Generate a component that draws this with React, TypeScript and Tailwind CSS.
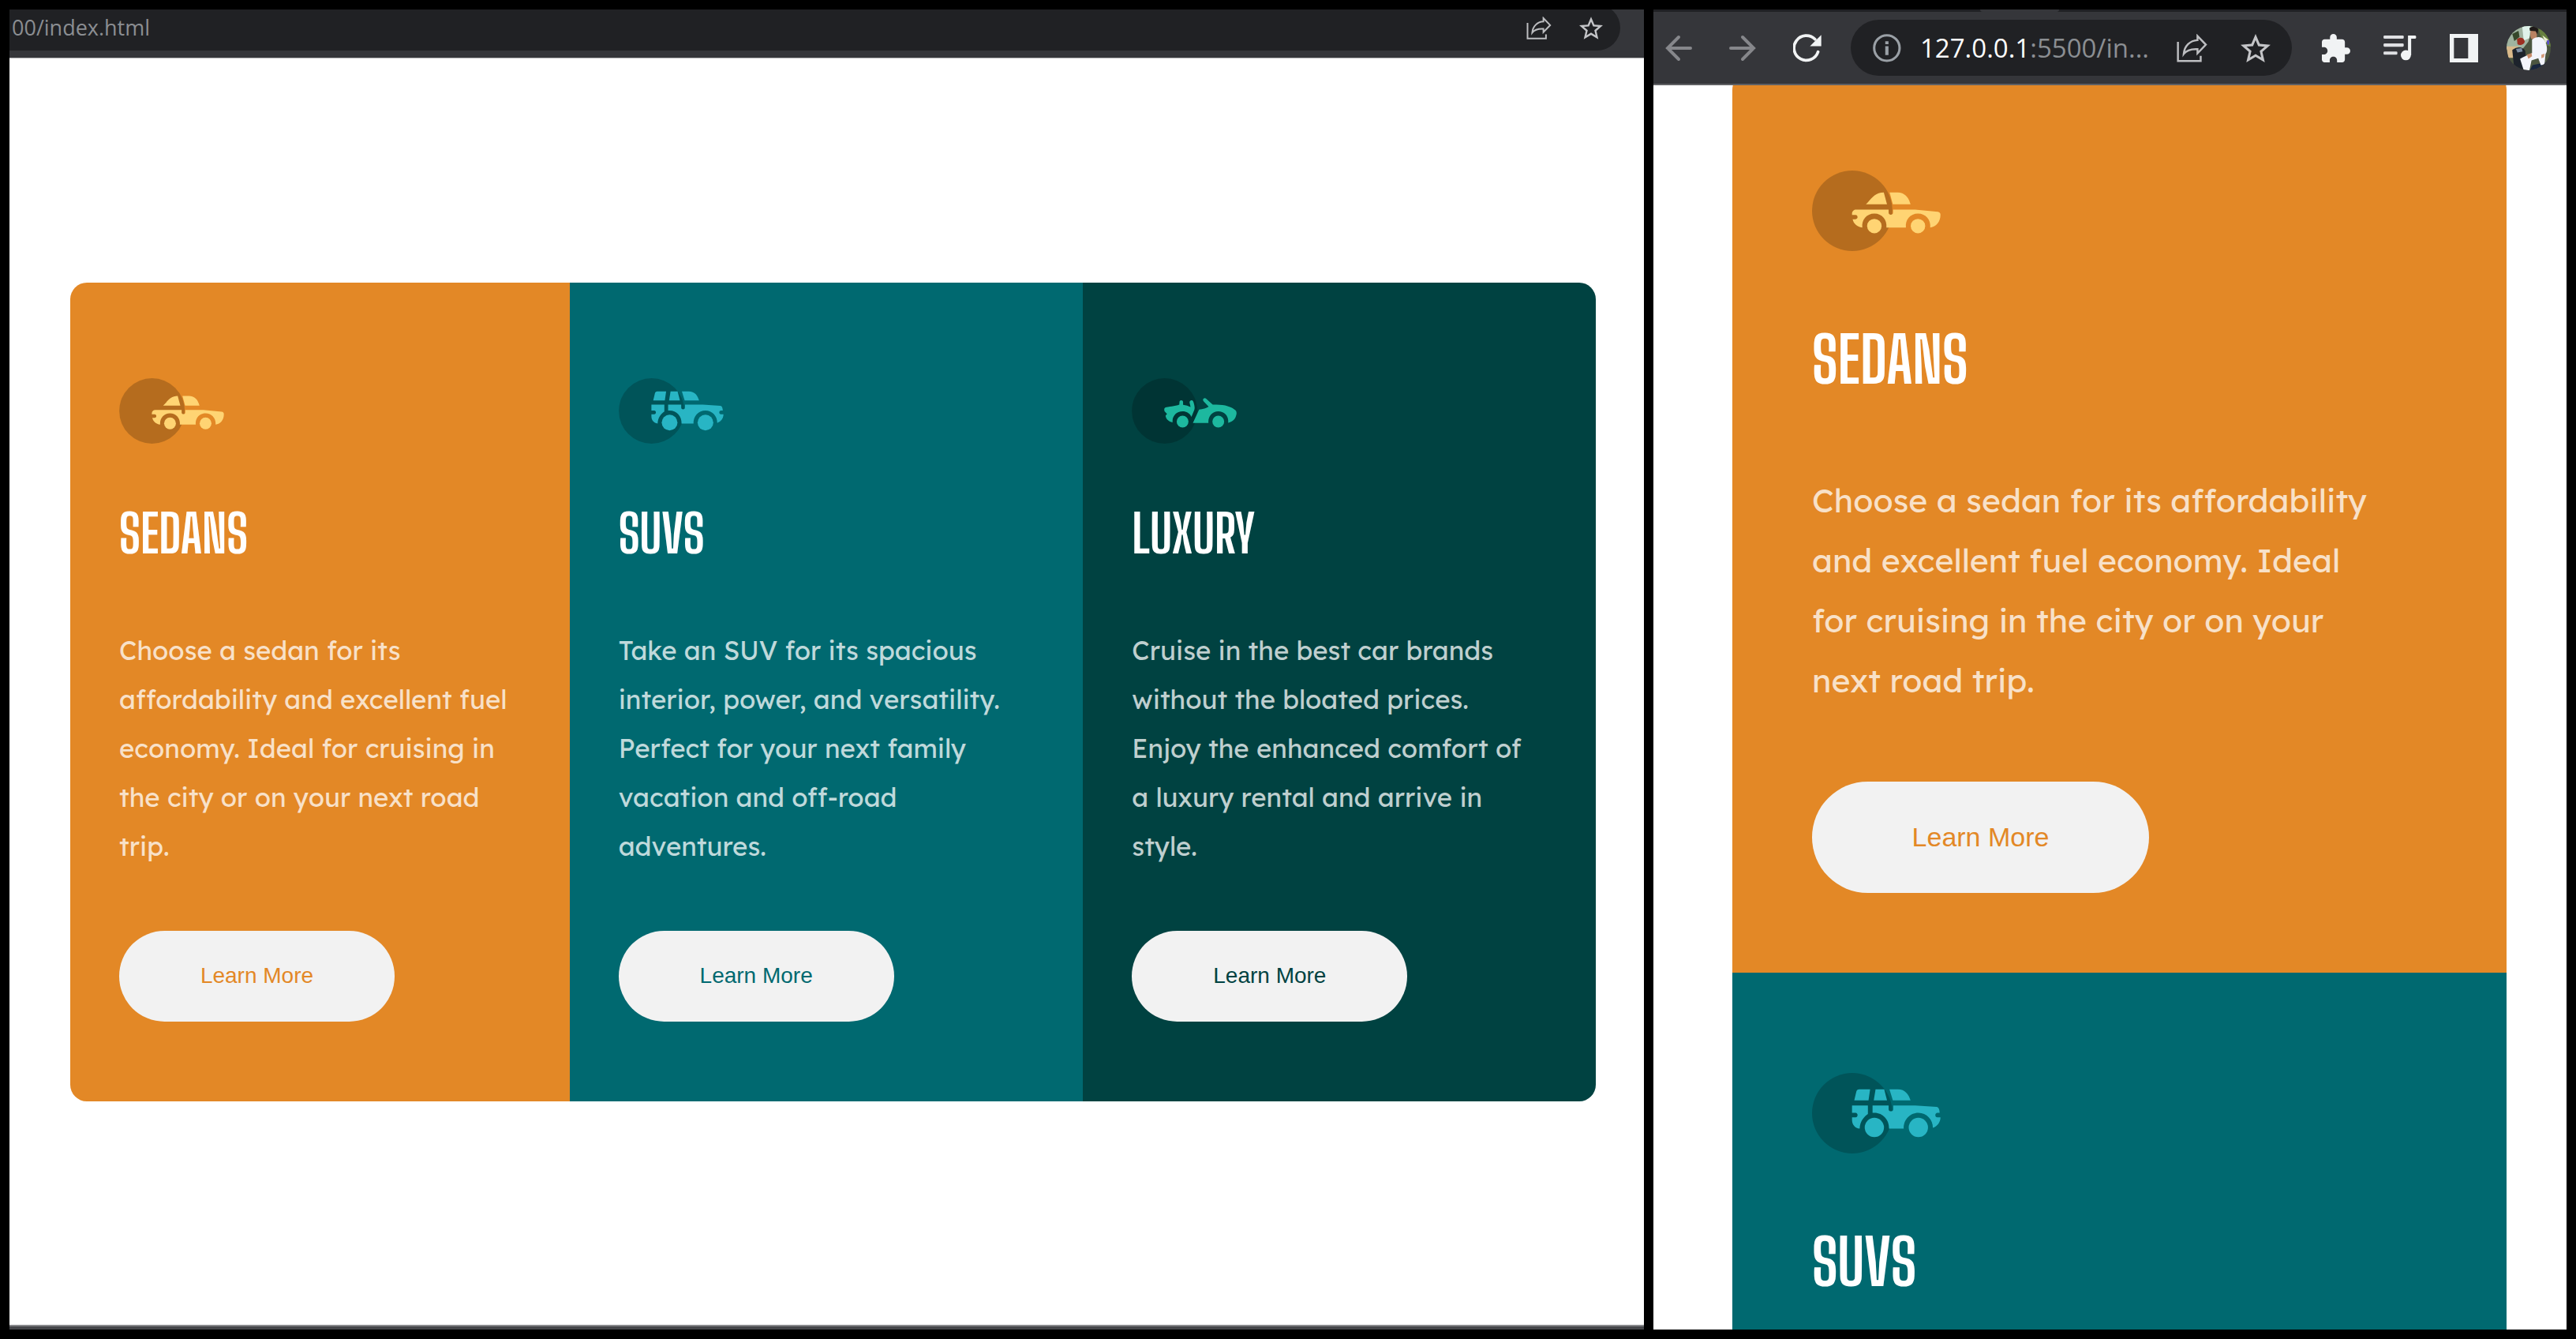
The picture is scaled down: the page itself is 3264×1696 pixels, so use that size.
import type { ReactNode } from "react";

type CarKind = "sedan" | "suv" | "luxury";

type Car = {
  kind: CarKind;
  title: string;
  text: string;
  panel: string;
  label: string;
};

const cars: Car[] = [
  {
    kind: "sedan",
    title: "SEDANS",
    text: "Choose a sedan for its affordability and excellent fuel economy. Ideal for cruising in the city or on your next road trip.",
    panel: "bg-[#e38826]",
    label: "text-[#e38826]",
  },
  {
    kind: "suv",
    title: "SUVS",
    text: "Take an SUV for its spacious interior, power, and versatility. Perfect for your next family vacation and off-road adventures.",
    panel: "bg-[#006970]",
    label: "text-[#006970]",
  },
  {
    kind: "luxury",
    title: "LUXURY",
    text: "Cruise in the best car brands without the bloated prices. Enjoy the enhanced comfort of a luxury rental and arrive in style.",
    panel: "bg-[#004241]",
    label: "text-[#004241]",
  },
];

/* ---------- car drawings, on a 64 x 40 grid ---------- */

function SedanShape() {
  return (
    <g fill="#ffd473">
      <path d="M26.8 16.8C29.4 14.2 31.2 10.9 35.7 10.9L37.3 16.8Z" />
      <path d="M38.6 10.9H42.6C46.4 10.9 48.2 13.8 49 16.8H40.2Z" />
      <path d="M22 19.4H38.1V21C38.1 22.3 40.3 22.3 40.3 21V19.4H51.3L62.6 20.5C63.4 20.6 63.9 21.1 63.9 22C63.9 25.4 61.8 28 58.8 28.3C59.2 24.6 56.6 21.4 52.7 21.4C48.8 21.4 46.3 24.6 46.7 28.3H37C37.4 24.6 34.9 21.4 31 21.4C27.1 21.4 24.6 24.6 25 28.3C22.4 28 20.7 26.4 20.2 24.2H21.6C23 24.2 23 22.1 21.6 22.1H19.9V21.4C19.9 20.2 20.8 19.4 22 19.4Z" />
      <circle cx="31" cy="27.6" r="3.6" />
      <circle cx="52.7" cy="27.6" r="3.6" />
    </g>
  );
}

function SuvShape() {
  return (
    <g fill="#28b5c4">
      <path d="M21 13.6L22 9.4C22.2 8.5 22.7 8.1 23.5 8.1H28.9L28.1 13.6Z" />
      <path d="M31.6 8.1H35.9L37.3 13.6H30.7Z" />
      <path d="M38.5 8.1H42.6C46.4 8.1 48 10.6 49 13.6H40.2Z" />
      <path d="M19.9 16.2H27.8V20.4C26.1 21.5 23.8 24 23.7 27.7C21.4 27.4 19.9 25.6 19.9 23.4V22.1H21.6C23 22.1 23 19.8 21.6 19.8H19.9Z" />
      <path d="M30.1 16.2H38.1V18C38.1 19.4 40.4 19.4 40.4 18V16.2H51.3L62 16.9C63 17 63.4 18.2 63.5 19.8H62.4C61 19.8 61 22.1 62.4 22.1H63.9C63.9 24.4 62.4 26.6 60.1 27.3C60.2 23.2 57 19.8 52.9 19.8C48.6 19.8 45.4 23.4 45.6 27.7H38.3C38.5 23.4 35.3 19.8 31 19.8H30.1Z" />
      <circle cx="31" cy="27.1" r="4.8" />
      <circle cx="52.9" cy="27.1" r="4.8" />
    </g>
  );
}

function LuxuryShape() {
  return (
    <g fill="#1db89f">
      <path d="M20.4 18C22 17.5 26.6 17.1 29 16.2L29.1 14.6C29.1 13.2 31.3 13.2 31.3 14.6V16.3C33 16.4 34.6 17.2 35.9 17.6L35.3 15C35 13.4 37.1 12.9 37.6 14.4C38.2 16.2 38.6 18 38.2 19.3L36.4 23.6C35.3 21.4 33.4 20.3 31 20.3C27.2 20.3 24.5 23.3 24.9 27C22.6 26.6 20.8 25 20.6 22.9L21.5 21.8L20 20.2C19.7 19.4 19.7 18.4 20.4 18Z" />
      <path d="M37.3 27.4L41.1 19.2C43.5 18.8 45.6 18.3 46.9 17.3L43.8 14.1C42.8 12.9 44.3 11.5 45.4 12.5L49.4 16.2C56 15.8 60.5 17.2 63.2 19.5C64.4 20.6 63.9 22.3 63.5 23.4C62.9 25.3 61.3 26.8 58.8 27.2C59.4 23.4 56.6 20.3 52.8 20.3C49.1 20.3 46.4 23.5 46.8 27.4Z" />
      <circle cx="31" cy="26.5" r="3.6" />
      <circle cx="52.8" cy="26.5" r="3.6" />
    </g>
  );
}

function CarIcon({ kind, className }: { kind: CarKind; className: string }) {
  return (
    <svg viewBox="0 0 64 40" className={className} aria-hidden="true">
      <circle cx="20" cy="20" r="20" fill="#000" fillOpacity="0.2" />
      {kind === "sedan" && <SedanShape />}
      {kind === "suv" && <SuvShape />}
      {kind === "luxury" && <LuxuryShape />}
    </svg>
  );
}

/* ---------- toolbar icons ---------- */

function ShareIcon({ className }: { className: string }) {
  return (
    <svg viewBox="0 0 96 88" className={className} fill="none" stroke="#bdbec1" strokeWidth="6" aria-hidden="true">
      <path d="M4 24V84H75V68" />
      <path d="M65 6L91 33L65 60V47C46 46 31 50 22 62C24 37 42 20 65 19Z" />
    </svg>
  );
}

function StarIcon({ className }: { className: string }) {
  return (
    <svg viewBox="2 2 20 19" className={className} fill="#c4c5c8" aria-hidden="true">
      <path d="M22 9.24l-7.19-.62L12 2 9.19 8.63 2 9.24l5.46 4.73L5.82 21 12 17.27 18.18 21l-1.63-7.03L22 9.24zM12 15.4l-3.76 2.27 1-4.28-3.32-2.88 4.38-.38L12 6.1l1.71 4.04 4.38.38-3.32 2.88 1 4.28L12 15.4z" />
    </svg>
  );
}

function BackIcon() {
  return (
    <svg viewBox="0 0 34 34" className="size-[34px]" fill="none" stroke="#86878b" strokeWidth="4" strokeLinecap="round" aria-hidden="true">
      <path d="M32 17H3M17 3L3 17L17 31" />
    </svg>
  );
}

function ForwardIcon() {
  return (
    <svg viewBox="0 0 34 34" className="size-[34px]" fill="none" stroke="#86878b" strokeWidth="4" strokeLinecap="round" aria-hidden="true">
      <path d="M2 17H31M17 3L31 17L17 31" />
    </svg>
  );
}

function ReloadIcon() {
  return (
    <svg viewBox="0 0 106 104" className="size-9" aria-hidden="true">
      <path d="M93 66A46 46 0 1 1 82 19" fill="none" stroke="#f1f3f4" strokeWidth="11" strokeLinecap="round" />
      <path d="M105 3V45H63Z" fill="#f1f3f4" />
    </svg>
  );
}

function InfoIcon() {
  return (
    <svg viewBox="0 0 105 105" className="size-9" aria-hidden="true">
      <circle cx="52" cy="52" r="47" fill="none" stroke="#9aa0a6" strokeWidth="9" />
      <path d="M46 27h12v11H46zM46 45h12v33H46z" fill="#9aa0a6" />
    </svg>
  );
}

function ExtensionIcon() {
  return (
    <svg viewBox="2 1 21 21" className="size-9" fill="#f1f3f4" aria-hidden="true">
      <path d="M20.5 11H19V7c0-1.1-.9-2-2-2h-4V3.5C13 2.12 11.88 1 10.5 1S8 2.12 8 3.5V5H4c-1.1 0-1.99.9-1.99 2v3.8H3.5c1.49 0 2.7 1.21 2.7 2.7s-1.21 2.7-2.7 2.7H2V20c0 1.1.9 2 2 2h3.8v-1.5c0-1.49 1.21-2.7 2.7-2.7 1.49 0 2.7 1.21 2.7 2.7V22H17c1.1 0 2-.9 2-2v-4h1.5c1.38 0 2.5-1.12 2.5-2.5S21.88 11 20.5 11z" />
    </svg>
  );
}

function QueueIcon() {
  return (
    <svg viewBox="0 0 124 98" className="h-[33px] w-[42px]" fill="#f1f3f4" aria-hidden="true">
      <rect x="0" y="3" width="76" height="12" rx="4" fill="#dfe0e3" />
      <rect x="0" y="33" width="76" height="12" rx="4" fill="#dfe0e3" />
      <rect x="0" y="63" width="52" height="12" rx="4" fill="#dfe0e3" />
      <circle cx="84" cy="77" r="19" />
      <path d="M92 77V3H119C124 3 124 15 119 15H104V77Z" />
    </svg>
  );
}

function SidePanelIcon() {
  return (
    <svg viewBox="0 0 108 108" className="size-9" aria-hidden="true">
      <path d="M0 0H108V108H0ZM16 15V93H70V15Z" fill="#f1f3f4" fillRule="evenodd" />
    </svg>
  );
}

function Avatar() {
  return (
    <svg viewBox="0 0 170 170" className="size-14 rounded-full" aria-hidden="true">
      <rect width="170" height="170" fill="#4b5540" />
      <path d="M20 20L60 0H100L84 60L60 90H0V60Z" fill="#9fb3a0" />
      <path d="M60 0H92L88 46L66 56Z" fill="#dff2ea" />
      <path d="M22 30L46 18L50 42L30 58Z" fill="#35472a" />
      <path d="M120 0H170V80L146 70L128 30Z" fill="#67803f" />
      <path d="M138 36L160 52L150 66Z" fill="#e9ecd0" />
      <path d="M0 78H44V122H6Z" fill="#d9b98a" />
      <path d="M40 50C52 40 68 44 70 60C68 72 50 76 42 70Z" fill="#9c2f22" />
      <path d="M22 92C40 78 62 78 72 96L78 170H30Z" fill="#1d232c" />
      <path d="M36 88L58 84L62 98L42 102Z" fill="#7c8da3" />
      <path d="M100 150L150 140L140 170H90Z" fill="#18263f" />
      <path d="M92 24C90 48 96 52 104 50L116 46L118 10H94Z" fill="#b98263" />
      <path d="M88 8C98 0 116 0 122 14L118 32L112 20L90 18Z" fill="#1f1a18" />
      <path d="M98 52C112 42 130 38 142 50C156 66 160 96 150 108L146 148L132 150L122 124L96 132L88 170H66L52 126C70 116 84 110 98 104Z" fill="#f3f4fb" />
      <path d="M78 110L96 104L98 116L84 126Z" fill="#c88a68" />
      <path d="M134 110L146 106L144 120L134 124Z" fill="#d39a78" />
      <path d="M154 56L164 54V72L156 70Z" fill="#5a4fc4" />
    </svg>
  );
}

function IconButton({ label, children }: { label: string; children: ReactNode }) {
  return (
    <button type="button" aria-label={label} className="flex shrink-0 items-center justify-center">
      {children}
    </button>
  );
}

/* ---------- wide window ---------- */

function WideCard({ car }: { car: Car }) {
  return (
    <article className={`flex flex-col items-start px-[62px] pt-[121px] pb-[101px] ${car.panel}`}>
      <CarIcon kind={car.kind} className="h-[83px] w-[133px]" />
      <h2 className="mt-[66px] font-['Big_Shoulders_Display','Open_Sans_Condensed',sans-serif] text-[66px] leading-[96px] font-bold text-[#fff]">
        {car.title}
      </h2>
      <p className="mt-[69px] max-w-[508px] font-['Lexend_Deca','Inter',sans-serif] text-[33px] leading-[62px] text-[#ffffffbf]">{car.text}</p>
      <button
        type="button"
        className={`mt-[76px] h-[115px] w-[349px] rounded-full bg-[#f2f2f2] font-['Liberation_Sans',Arial,sans-serif] text-[28px] ${car.label}`}
      >
        Learn More
      </button>
    </article>
  );
}

function WideWindow() {
  return (
    <section aria-label="Desktop view" className="flex min-w-0 flex-[2071] flex-col bg-white">
      <header className="flex h-[62px] items-end overflow-hidden border-b border-[#b0b1b3] bg-[#35363a] pr-[30px] pb-[9px]">
        <div className="flex h-[58px] flex-1 items-center rounded-r-full bg-[#202124] pr-[22px]">
          <input
            aria-label="Address"
            defaultValue="00/index.html"
            className="min-w-0 flex-1 bg-transparent pl-[3px] font-['Segoe_UI','Open_Sans',sans-serif] text-[27px] text-[#8b8e92] outline-none"
          />
          <div className="flex items-center gap-[35px]">
            <IconButton label="Share this page">
              <ShareIcon className="h-[29px] w-8" />
            </IconButton>
            <IconButton label="Bookmark this page">
              <StarIcon className="h-[29px] w-[30px]" />
            </IconButton>
          </div>
        </div>
      </header>
      <main className="flex flex-1 items-center pr-[61px] pl-[77px]">
        <div className="grid w-full grid-cols-[633fr_651fr_650fr] overflow-hidden rounded-[21px]">
          {cars.map((car) => (
            <WideCard key={car.kind} car={car} />
          ))}
        </div>
      </main>
      <div className="h-1.5 border-t-2 border-[#88898c] bg-[#45464a]" />
    </section>
  );
}

/* ---------- narrow window ---------- */

function NarrowCard({ car }: { car: Car }) {
  return (
    <article className={`flex flex-col items-start px-[101px] pt-[127px] pb-[101px] ${car.panel}`}>
      <CarIcon kind={car.kind} className="h-[102px] w-[163px]" />
      <h2 className="mt-[81px] font-['Big_Shoulders_Display','Open_Sans_Condensed',sans-serif] text-[80px] leading-[112px] font-bold text-[#fff]">
        {car.title}
      </h2>
      <p className="mt-[85px] max-w-[720px] font-['Lexend_Deca','Inter',sans-serif] text-[41px] leading-[76px] text-[#ffffffbf]">{car.text}</p>
      <button
        type="button"
        className={`mt-[90px] h-[141px] w-[427px] rounded-full bg-[#f2f2f2] font-['Liberation_Sans',Arial,sans-serif] text-[34px] ${car.label}`}
      >
        Learn More
      </button>
    </article>
  );
}

function NarrowWindow() {
  return (
    <section aria-label="Mobile view" className="flex min-w-0 flex-[1157] flex-col overflow-hidden bg-white">
      <div className="flex h-[3px] shrink-0 bg-[#202124]">
        <div className="ml-[414px] w-[100px] rounded-b-sm bg-[#35363a]" />
      </div>
      <header className="flex h-[93px] shrink-0 items-center border-b-2 border-[#5f6063] bg-[#35363a] pr-5 pl-[15px]">
        <nav aria-label="History" className="flex items-center gap-[47px]">
          <IconButton label="Back">
            <BackIcon />
          </IconButton>
          <IconButton label="Forward">
            <ForwardIcon />
          </IconButton>
          <IconButton label="Reload">
            <ReloadIcon />
          </IconButton>
        </nav>
        <div className="ml-[37px] flex h-[71px] flex-1 items-center rounded-full bg-[#202124] pr-[27px] pl-7">
          <IconButton label="View site information">
            <InfoIcon />
          </IconButton>
          <p className="ml-6 flex-1 font-['Segoe_UI','Open_Sans',sans-serif] text-[33px] whitespace-nowrap text-[#8b8e92]">
            <span className="text-[#fff]">127.0.0.1</span>:5500/in...
          </p>
          <div className="flex items-center gap-[42px]">
            <IconButton label="Share this page">
              <ShareIcon className="h-9 w-[39px]" />
            </IconButton>
            <IconButton label="Bookmark this page">
              <StarIcon className="h-9 w-[38px]" />
            </IconButton>
          </div>
        </div>
        <div className="ml-[38px] flex items-center gap-[42px]">
          <IconButton label="Extensions">
            <ExtensionIcon />
          </IconButton>
          <IconButton label="Media controls">
            <QueueIcon />
          </IconButton>
          <IconButton label="Side panel">
            <SidePanelIcon />
          </IconButton>
        </div>
        <div className="ml-9 flex">
          <IconButton label="Profile">
            <Avatar />
          </IconButton>
        </div>
      </header>
      <main className="min-h-0 flex-1 overflow-y-auto pr-[76px] pl-[100px] [scrollbar-width:none]">
        <div className="-mt-[19px] overflow-hidden rounded-[25px]">
          {cars.map((car) => (
            <NarrowCard key={car.kind} car={car} />
          ))}
        </div>
      </main>
    </section>
  );
}

export default function App() {
  return (
    <div className="flex h-screen gap-3 overflow-hidden bg-black p-3">
      <WideWindow />
      <NarrowWindow />
    </div>
  );
}
